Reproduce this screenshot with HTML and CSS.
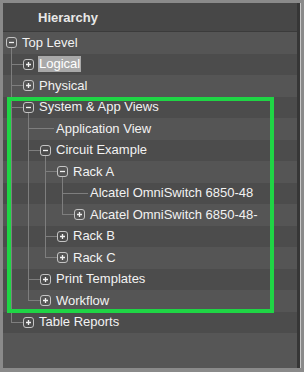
FILE: index.html
```html
<!DOCTYPE html>
<html lang="en">
<head>
    <meta charset="UTF-8">
    <meta name="viewport" content="width=device-width, initial-scale=1.0">
    <title>Hierarchy</title>
    <link rel="stylesheet" href="styles.css">
</head>
<body>
    <div class="panel">
        <div class="header">Hierarchy</div>
        <div class="tree" id="tree"></div>
    </div>
    <div class="callout"></div>

    <script>
        const tree = {
            label: 'Top Level', children: [
                { label: 'Logical', selected: true, children: [] },
                { label: 'Physical', children: [] },
                { label: 'System & App Views', open: true, children: [
                    { label: 'Application View' },
                    { label: 'Circuit Example', open: true, children: [
                        { label: 'Rack A', open: true, children: [
                            { label: 'Alcatel OmniSwitch 6850-48' },
                            { label: 'Alcatel OmniSwitch 6850-48-', children: [] }
                        ] },
                        { label: 'Rack B', children: [] },
                        { label: 'Rack C', children: [] }
                    ] },
                    { label: 'Print Templates', children: [] },
                    { label: 'Workflow', children: [] }
                ] },
                { label: 'Table Reports', children: [] }
            ], open: true
        };

        const container = document.getElementById('tree');

        function toggleIcon(open) {
            const bar = open ? 'M3 5.5h5' : 'M3 5.5h5M5.5 3v5';
            return `<svg width="11" height="11" viewBox="0 0 11 11">
                <rect x="0.5" y="0.5" width="10" height="10" rx="2.5" fill="none" stroke="#c4c4c4"/>
                <path d="${bar}" stroke="#f2f2f2" stroke-width="1.3" fill="none"/>
            </svg>`;
        }

        function addRow(node, level, guides, isLast) {
            const row = document.createElement('div');
            row.className = 'row';

            let html = guides.map(g => `<span class="guide${g ? ' pipe' : ''}"></span>`).join('');
            html += level === 0 ? '<span class="pad"></span>' : `<span class="elbow ${isLast ? 'end' : 'tee'}"></span>`;

            if (node.children) {
                html += `<span class="toggle${node.open ? ' open' : ''}">${toggleIcon(node.open)}</span>`;
            } else {
                html += '<span class="stub"></span>';
            }

            const text = node.label.replace('&', '&amp;');
            html += `<span class="label${node.selected ? ' selected' : ''}${node.children ? '' : ' leaf'}">${text}</span>`;
            row.innerHTML = html;
            container.appendChild(row);

            if (node.open && node.children) {
                const next = level === 0 ? [] : guides.concat(!isLast);
                node.children.forEach((child, i) => {
                    addRow(child, level + 1, next, i === node.children.length - 1);
                });
            }
        }

        addRow(tree, 0, [], true);
    </script>
</body>
</html>
```

FILE: styles.css
```css
* {
    margin: 0;
    padding: 0;
    box-sizing: border-box;
}

body {
    position: relative;
    width: 304px;
    height: 372px;
    overflow: hidden;
    background: #8a8a8a;
    font-family: 'Liberation Sans', Arial, sans-serif;
    font-size: 13px;
    color: #f2f2f2;
}

.panel {
    margin: 3px 0 0 3px;
    width: 297px;
    height: 365px;
    background: #565656;
    border-right: 3px solid #363636;
    box-shadow: 1px 0 0 #c8c8c8;
}

.header {
    height: 29px;
    display: flex;
    align-items: center;
    padding-left: 35px;
    background: #474747;
    border-bottom: 1px solid #3b3b3b;
    font-weight: bold;
    color: #e8e8e8;
}

.row {
    height: 21.5px;
    display: flex;
    align-items: center;
    background: #555555;
}

.row:nth-child(even) {
    background: #4c4c4c;
}

.guide,
.elbow,
.pad,
.toggle,
.stub {
    flex-shrink: 0;
    align-self: stretch;
}

.pad {
    width: 3px;
}

.guide {
    width: 17px;
}

.guide.pipe {
    background: linear-gradient(#7e7e7e, #7e7e7e) 8px 0 / 1px 100% no-repeat;
}

.elbow {
    width: 20px;
}

.elbow.tee {
    background:
        linear-gradient(#7e7e7e, #7e7e7e) 8px 0 / 1px 100% no-repeat,
        linear-gradient(#7e7e7e, #7e7e7e) 8px 50% / 12px 1px no-repeat;
}

.elbow.end {
    background:
        linear-gradient(#7e7e7e, #7e7e7e) 8px 0 / 1px 50% no-repeat,
        linear-gradient(#7e7e7e, #7e7e7e) 8px 50% / 12px 1px no-repeat;
}

.toggle {
    width: 11px;
    display: flex;
    align-items: center;
}

.toggle.open {
    background: linear-gradient(#7e7e7e, #7e7e7e) 5px 100% / 1px calc(50% - 5px) no-repeat;
}

.toggle svg {
    display: block;
}

.stub {
    width: 14px;
    background: linear-gradient(#7e7e7e, #7e7e7e) 0 50% / 100% 1px no-repeat;
}

.label {
    margin-left: 5px;
    white-space: nowrap;
    line-height: 14px;
}

.label.leaf {
    margin-left: 2px;
}

.label.selected {
    margin-left: 4px;
    padding: 1px 1px;
    background: #a9a9a9;
    color: #ffffff;
}

.callout {
    position: absolute;
    left: 7px;
    top: 97px;
    width: 267px;
    height: 216px;
    border: 4px solid #1fd545;
}
```
